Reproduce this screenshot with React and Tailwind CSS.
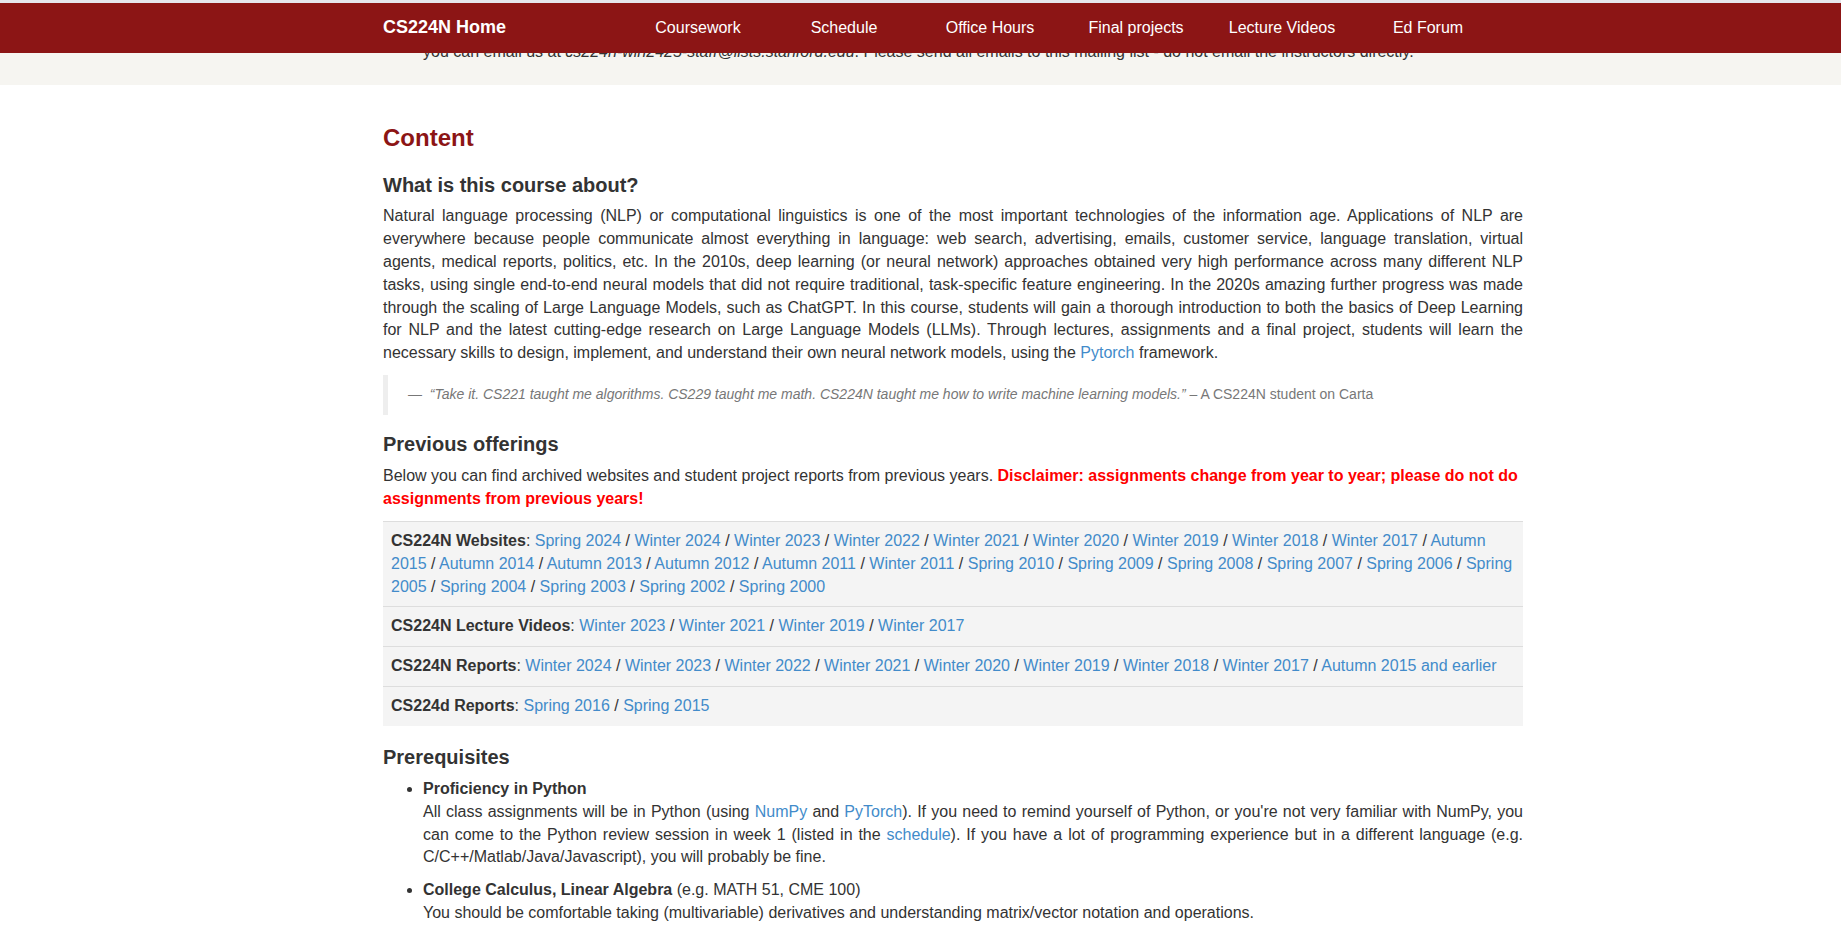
import React from 'react';

const navLinks = ['Coursework', 'Schedule', 'Office Hours', 'Final projects', 'Lecture Videos', 'Ed Forum'];

const offerings = [
  {
    label: 'CS224N Websites',
    links: [
      'Spring 2024', 'Winter 2024', 'Winter 2023', 'Winter 2022', 'Winter 2021', 'Winter 2020', 'Winter 2019',
      'Winter 2018', 'Winter 2017', 'Autumn 2015', 'Autumn 2014', 'Autumn 2013', 'Autumn 2012', 'Autumn 2011',
      'Winter 2011', 'Spring 2010', 'Spring 2009', 'Spring 2008', 'Spring 2007', 'Spring 2006', 'Spring 2005',
      'Spring 2004', 'Spring 2003', 'Spring 2002', 'Spring 2000',
    ],
  },
  { label: 'CS224N Lecture Videos', links: ['Winter 2023', 'Winter 2021', 'Winter 2019', 'Winter 2017'] },
  {
    label: 'CS224N Reports',
    links: [
      'Winter 2024', 'Winter 2023', 'Winter 2022', 'Winter 2021', 'Winter 2020', 'Winter 2019', 'Winter 2018',
      'Winter 2017', 'Autumn 2015 and earlier',
    ],
  },
  { label: 'CS224d Reports', links: ['Spring 2016', 'Spring 2015'] },
];

const A = ({ children }) => (
  <a href="#" className="text-[#428bca] no-underline">
    {children}
  </a>
);

const App = () => {
  return (
    <div className="relative h-[935px] overflow-hidden bg-white text-[16px] leading-[1.42857] text-[#333] font-['Liberation_Sans',Arial,sans-serif]">
      {/* fixed navbar */}
      <nav className="fixed top-0 inset-x-0 z-10 border-t-[3px] border-[#e6e6ec] bg-[#8c1515]">
        <div className="ml-[368px] px-[15px] h-[50px] flex items-center">
          <a href="#" className="w-[242px] text-[18px] font-bold text-white">
            CS224N Home
          </a>
          <ul className="flex">
            {navLinks.map((l) => (
              <li key={l} className="w-[146px] text-center">
                <a href="#" className="text-white">
                  {l}
                </a>
              </li>
            ))}
          </ul>
        </div>
      </nav>

      {/* band scrolled under navbar: tail end of a wrapped list item */}
      <div className="bg-[#f6f5f1] pt-[41px] pb-[21px]">
        <div className="ml-[368px] w-[1170px] px-[15px]">
          <p className="pl-[40px]">
            you can email us at <em>cs224n-win2425-staff@lists.stanford.edu</em>. Please send all emails to this mailing
            list - do not email the instructors directly.
          </p>
        </div>
      </div>

      <div className="ml-[368px] w-[1170px] px-[15px]">
        <h2 className="mt-[40px] mb-[23px] text-[24px] leading-[1.1] font-bold text-[#8c1515]">Content</h2>

        <h3 className="mb-[9px] text-[20px] leading-[1.1] font-bold">What is this course about?</h3>
        <p className="mb-[10px] text-justify">
          Natural language processing (NLP) or computational linguistics is one of the most important technologies of the
          information age. Applications of NLP are everywhere because people communicate almost everything in language: web
          search, advertising, emails, customer service, language translation, virtual agents, medical reports, politics,
          etc. In the 2010s, deep learning (or neural network) approaches obtained very high performance across many
          different NLP tasks, using single end-to-end neural models that did not require traditional, task-specific feature
          engineering. In the 2020s amazing further progress was made through the scaling of Large Language Models, such as
          ChatGPT. In this course, students will gain a thorough introduction to both the basics of Deep Learning for NLP and
          the latest cutting-edge research on Large Language Models (LLMs). Through lectures, assignments and a final
          project, students will learn the necessary skills to design, implement, and understand their own neural network
          models, using the <A>Pytorch</A> framework.
        </p>

        <blockquote className="mb-[18px] border-l-[5px] border-[#eeeeee] px-[20px] py-[10px]">
          <footer className="text-[14px] text-[#777]">
            {'\u2014\u00a0 '}
            <em>
              “Take it. CS221 taught me algorithms. CS229 taught me math. CS224N taught me how to write machine learning
              models.”
            </em>{' '}
            – A CS224N student on Carta
          </footer>
        </blockquote>

        <h3 className="mb-[10px] text-[20px] leading-[1.1] font-bold">Previous offerings</h3>
        <p className="mb-[10px]">
          Below you can find archived websites and student project reports from previous years.{' '}
          <b className="text-[#ff0000]">
            Disclaimer: assignments change from year to year; please do not do assignments from previous years!
          </b>
        </p>

        <table className="mb-[20px] w-full border-collapse">
          <tbody>
            {offerings.map((row) => (
              <tr key={row.label} className="bg-[#f4f4f4]">
                <td className="border-t border-[#dddddd] p-[8px]">
                  <b>{row.label}</b>:{' '}
                  {row.links.map((l, i) => (
                    <React.Fragment key={l + i}>
                      <A>{l}</A>
                      {i < row.links.length - 1 ? ' / ' : ''}
                    </React.Fragment>
                  ))}
                </td>
              </tr>
            ))}
          </tbody>
        </table>

        <h3 className="mb-[10px] text-[20px] leading-[1.1] font-bold">Prerequisites</h3>
        <ul className="list-disc pl-[40px] text-justify">
          <li className="mb-[10px]">
            <b>Proficiency in Python</b>
            <br />
            All class assignments will be in Python (using <A>NumPy</A> and <A>PyTorch</A>). If you need to remind yourself
            of Python, or you're not very familiar with NumPy, you can come to the Python review session in week 1 (listed in
            the <A>schedule</A>). If you have a lot of programming experience but in a different language (e.g.
            C/C++/Matlab/Java/Javascript), you will probably be fine.
          </li>
          <li className="mb-[10px]">
            <b>College Calculus, Linear Algebra</b> (e.g. MATH 51, CME 100)
            <br />
            You should be comfortable taking (multivariable) derivatives and understanding matrix/vector notation and
            operations.
          </li>
          <li className="mb-[10px]">
            <b>Basic Probability and Statistics</b> (e.g. CS 109 or equivalent)
            <br />
            You should know the basics of probabilities, gaussian distributions, mean, standard deviation, etc.
          </li>
        </ul>
      </div>
    </div>
  );
};

export default App;
